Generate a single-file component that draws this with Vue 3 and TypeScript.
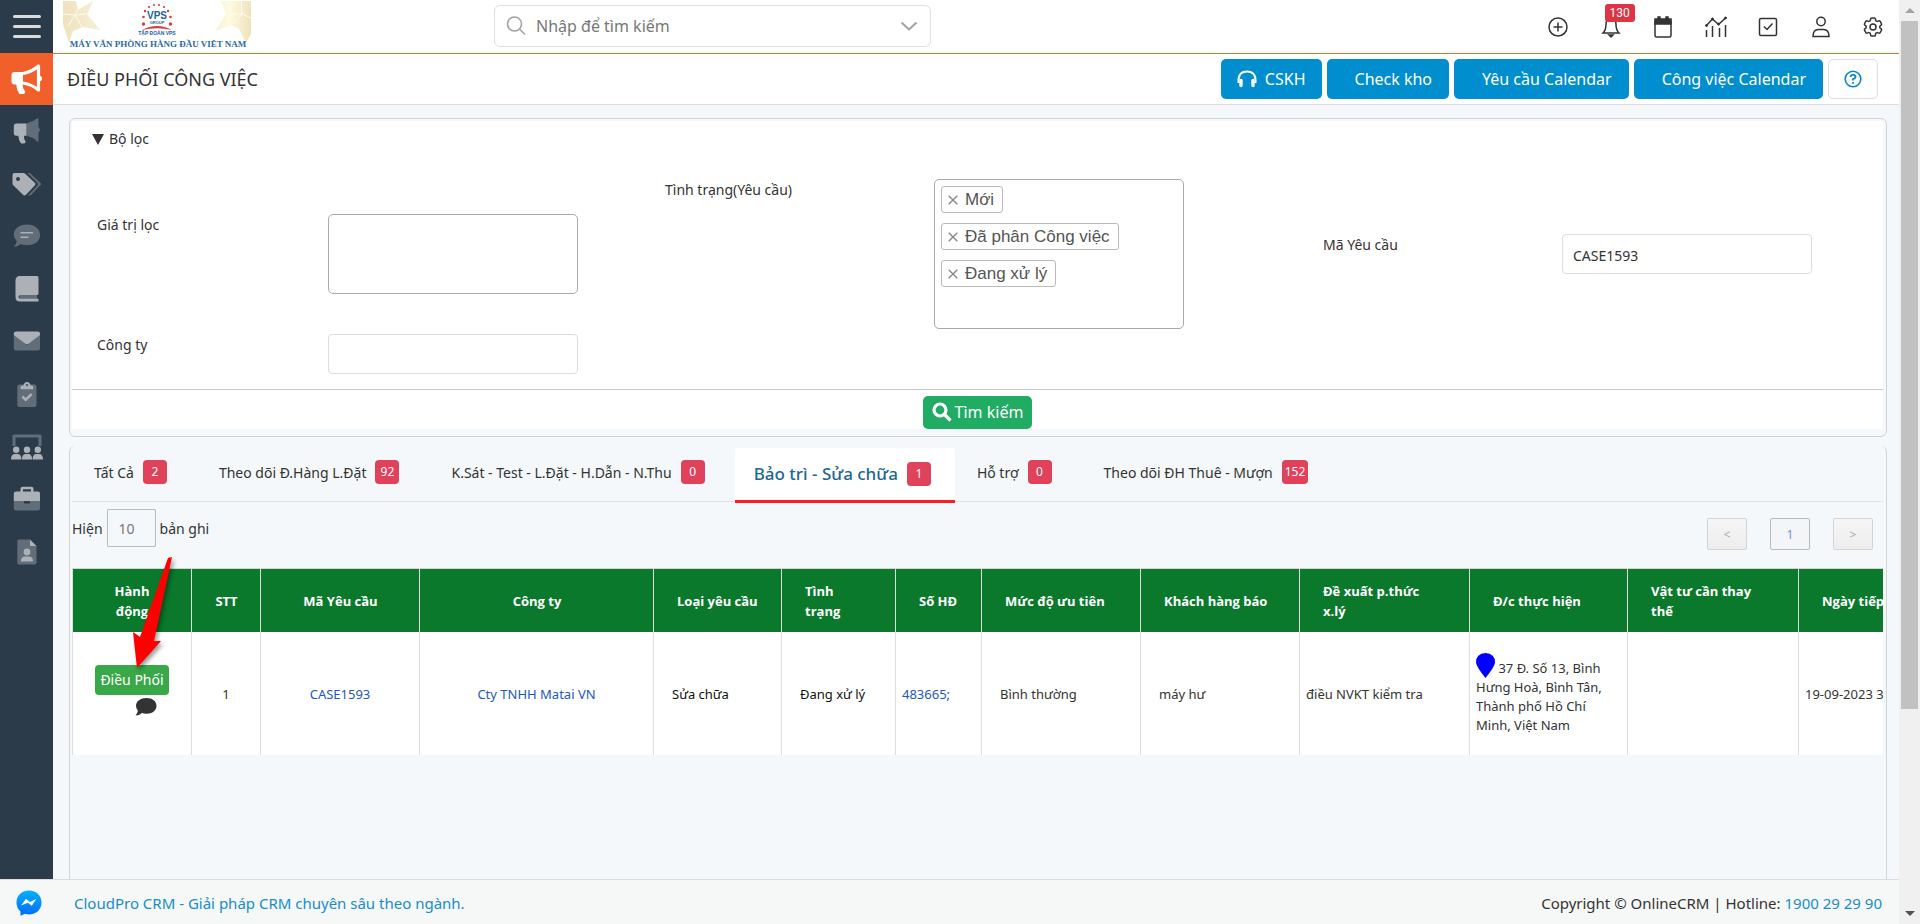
<script setup lang="ts">
import { ref } from 'vue'

type Shape = { d: string; tone: 'light' | 'dark' | 'hole' }
type MenuItem = { label: string; shapes: Shape[] }

const menu: MenuItem[] = [
  {
    label: 'Chiến dịch',
    shapes: [
      { d: 'M15.500 8.500 L23 5.500 L26.500 3.200 Q27.500 3 27.500 4.500 V12.500 Q29 13.500 29 15 Q29 16.500 27.500 17.300 V25.500 Q27.500 27.200 26.200 26.600 L23 23.500 L15.500 20.800 Z', tone: 'dark' },
      { d: 'M5 8.500 H15.500 V20.800 H13 Q12.500 24 14.600 26.500 Q14.500 28.500 13 28.500 H10 Q7.500 25 7.300 20.800 H5 Q2.800 20.800 2.800 18 V11 Q2.800 8.500 5 8.500 Z', tone: 'light' },
    ],
  },
  {
    label: 'Nhãn',
    shapes: [
      { d: 'M16.500 5 H19 L29.500 15 Q30.500 16 29.500 17 L19.500 27.500 H17 L26.500 17.500 Q27.500 16 26.500 15 Z', tone: 'dark' },
      { d: 'M1.500 7 Q1.500 5 3.500 5 H12 Q13.500 5 14.500 6 L24 15 Q25 16 24 17.200 L15 26.800 Q13.500 28 12 26.800 L2.500 17.500 Q1.500 16.500 1.500 15 Z M7 9 A2 2 0 1 0 7 13 A2 2 0 1 0 7 9 Z', tone: 'light' },
    ],
  },
  {
    label: 'Bình luận',
    shapes: [
      { d: 'M16 4.500 C24 4.500 29 9 29 15 C29 21 24 25.300 16 25.300 Q12.500 25.300 9.500 24 Q6.500 27 2.800 26.800 Q5.500 24 5.800 21 Q2.800 18.500 2.800 15 C2.800 9 8 4.500 16 4.500 Z', tone: 'dark' },
      { d: 'M9.500 12 H22 V13.500 H9.500 Z M9.500 16.500 H17.500 V18 H9.500 Z', tone: 'light' },
    ],
  },
  {
    label: 'Tài liệu',
    shapes: [
      { d: 'M8.500 21.500 H26 V26 H8.500 Z', tone: 'dark' },
      { d: 'M9 3 H26 Q27.500 3 27.500 4.500 V20.500 Q27.500 22 26 22 H9.500 Q7.500 22 7.500 24 Q7.500 25.800 9.500 25.800 H27.500 V28.500 H9 Q4.500 28.500 4.500 24 V7.500 Q4.500 3 9 3 Z', tone: 'light' },
    ],
  },
  {
    label: 'Thư',
    shapes: [
      { d: 'M2.800 9 L16 20 L29 9 V23.500 Q29 25.500 27 25.500 H5 Q2.800 25.500 2.800 23.500 Z', tone: 'dark' },
      { d: 'M5 6.500 H27 Q29 6.500 29 8.500 V10 L18 18.500 Q16 20 14 18.500 L2.800 10 V8.500 Q2.800 6.500 5 6.500 Z', tone: 'light' },
    ],
  },
  {
    label: 'Công việc',
    shapes: [
      { d: 'M8.500 6.500 H23.500 Q25.500 6.500 25.500 8.500 V27 Q25.500 29 23.500 29 H8.500 Q6.300 29 6.300 27 V8.500 Q6.300 6.500 8.500 6.500 Z', tone: 'dark' },
      { d: 'M9.500 11.300 V9 Q9.500 7.500 11.500 7.500 H12.500 Q13 4 16 4 Q19 4 19.500 7.500 H20.500 Q22.300 7.500 22.300 9 V11.300 Z M16 6 A1.300 1.300 0 1 0 16 8.600 A1.300 1.300 0 1 0 16 6 Z M10.500 19.500 L12.200 17.500 L14.700 20 L20 15 L21.500 17 L14.700 23.500 Z', tone: 'light' },
    ],
  },
  {
    label: 'Hội thảo',
    shapes: [
      { d: 'M1.500 5 Q1.500 3.500 3 3.500 H29 Q30.500 3.500 30.500 5 V15 H27.500 V6.500 H4.500 V15 H1.500 Z', tone: 'dark' },
      { d: 'M5.200 15.500 A3.200 3.200 0 1 0 5.200 21.900 A3.200 3.200 0 1 0 5.200 15.500 Z M16 15.500 A3.200 3.200 0 1 0 16 21.900 A3.200 3.200 0 1 0 16 15.500 Z M26.800 15.500 A3.200 3.200 0 1 0 26.800 21.900 A3.200 3.200 0 1 0 26.800 15.500 Z M0 28.500 Q0 23 4 23 H6.500 Q10.400 23 10.400 28.500 Z M10.900 28.500 Q10.900 23 15 23 H17 Q21.100 23 21.100 28.500 Z M21.600 28.500 Q21.600 23 25.500 23 H28 Q32 23 32 28.500 Z', tone: 'light' },
    ],
  },
  {
    label: 'Hợp đồng',
    shapes: [
      { d: 'M2.800 18 H29 V25.500 Q29 27.500 27 27.500 H5 Q2.800 27.500 2.800 25.500 Z', tone: 'dark' },
      { d: 'M9.500 8.500 V5.500 Q9.500 3.700 11.500 3.700 H20.500 Q22.500 3.700 22.500 5.500 V8.500 H27 Q29 8.500 29 10.500 V18 H2.800 V10.500 Q2.800 8.500 5 8.500 Z M12 6.200 V8.500 H20 V6.200 Z', tone: 'light' },
      { d: 'M13 18 H19 V20 Q19 20.500 18.500 20.500 H13.500 Q13 20.500 13 20 Z', tone: 'hole' },
    ],
  },
  {
    label: 'Hồ sơ',
    shapes: [
      { d: 'M8 3.500 H19 V10 H25.500 V26.500 Q25.500 28.500 23.500 28.500 H8 Q6.300 28.500 6.300 26.500 V5 Q6.300 3.500 8 3.500 Z', tone: 'dark' },
      { d: 'M19 3.500 L25.500 10 H19 Z M16 12.500 A3.400 3.400 0 1 0 16 19.300 A3.400 3.400 0 1 0 16 12.500 Z M10 25.500 Q10 20.500 14 20.500 H18 Q22 20.500 22 25.500 Z', tone: 'light' },
    ],
  },
]

const statuses = ref<string[]>(['Mới', 'Đã phân Công việc', 'Đang xử lý'])
const caseCode = ref('CASE1593')
const company = ref('')
const filterValue = ref('')
const pageSize = ref('10')

const tabs = [
  { label: 'Tất Cả', count: 2 },
  { label: 'Theo dõi Đ.Hàng L.Đặt', count: 92 },
  { label: 'K.Sát - Test - L.Đặt - H.Dẫn - N.Thu', count: 0 },
  { label: 'Bảo trì - Sửa chữa', count: 1 },
  { label: 'Hỗ trợ', count: 0 },
  { label: 'Theo dõi ĐH Thuê - Mượn', count: 152 },
]
const activeTab = ref(3)

const columns = [
  { title: 'Hành động', width: 120, kind: 'center narrow' },
  { title: 'STT', width: 69, kind: 'center' },
  { title: 'Mã Yêu cầu', width: 159, kind: 'center' },
  { title: 'Công ty', width: 234, kind: 'center' },
  { title: 'Loại yêu cầu', width: 128, kind: '' },
  { title: 'Tình trạng', width: 114, kind: 'roomy' },
  { title: 'Số HĐ', width: 86, kind: '' },
  { title: 'Mức độ ưu tiên', width: 159, kind: '' },
  { title: 'Khách hàng báo', width: 159, kind: '' },
  { title: 'Đề xuất p.thức x.lý', width: 170, kind: 'roomy' },
  { title: 'Đ/c thực hiện', width: 158, kind: '' },
  { title: 'Vật tư cần thay thế', width: 171, kind: 'roomy' },
  { title: 'Ngày tiếp', width: 161, kind: '' },
]

function removeStatus(name: string) {
  statuses.value = statuses.value.filter((s) => s !== name)
}
</script>

<template>
  <div class="app">
    <div class="view">
      <div class="body">
        <nav class="sidebar" aria-label="Menu chính">
          <button class="burger" type="button" aria-label="Mở menu"><i></i><i></i><i></i></button>
          <a class="current" href="#" aria-label="Điều phối">
            <svg width="32" height="32" viewBox="0 0 32 32" fill="none">
              <path d="M3.500 9 H12 V21.500 H11.500 Q11.500 25.500 14.200 28.500 Q14 31 12.500 31 H8.500 Q5.500 27 5.200 21.500 H3.500 Q.5 21.500 .5 18.500 V12 Q.5 9 3.500 9 Z" fill="#fff" />
              <path d="M12 10.500 Q21 9 27.500 3 V27 Q21 21.500 12 20" stroke="#fff" stroke-width="3.200" stroke-linejoin="round" />
              <path d="M28 12.500 Q31 13 31 15.500 Q31 18 28 18.500 Z" fill="#fff" />
            </svg>
          </a>
          <ul class="menu">
            <li v-for="item in menu" :key="item.label">
              <a href="#" :aria-label="item.label">
                <svg width="32" height="32" viewBox="0 0 32 32">
                  <path v-for="(s, i) in item.shapes" :key="i" :class="s.tone" :d="s.d" fill-rule="evenodd" />
                </svg>
              </a>
            </li>
          </ul>
        </nav>

        <div class="content">
          <header class="topbar">
            <a class="logo" href="#" aria-label="VPS">
              <svg width="188" height="48" viewBox="0 0 188 48">
                <defs>
                  <linearGradient id="goldL" x1="0" x2="1"><stop offset="0" stop-color="#efe3bd" /><stop offset="1" stop-color="#f7eed6" /></linearGradient>
                  <linearGradient id="goldR" x1="0" x2="1"><stop offset="0" stop-color="#f9f1d6" /><stop offset=".4" stop-color="#fffbe0" /><stop offset="1" stop-color="#efe2bb" /></linearGradient>
                </defs>
                <path d="M0 1 H13 L15 10 L30 1 L24 14 L37 30 L20 27 L10 31 L6 43 L0 24 Z" fill="url(#goldL)" />
                <path d="M188 1 H158 L163 14 L152 31 L169 25 L176 29 L183 43 L188 34 Z" fill="url(#goldR)" />
                <path d="M0 14 L12 15 L15 10 M12 15 L23 14 M12 15 L19 27 M12 15 L5 26 M178 1 L179 14 L163 14 M179 14 L188 18 M179 14 L169 25" stroke="#fffaf0" stroke-width="1" fill="none" />
                <g fill="#dc3a40">
                  <circle cx="80.500" cy="24" r="1.700" /><circle cx="80.500" cy="17" r="1.300" /><circle cx="82" cy="11" r="1.200" /><circle cx="86" cy="7" r="1.100" /><circle cx="91" cy="5" r="1" /><circle cx="96" cy="5" r="1" /><circle cx="101" cy="7" r="1.100" /><circle cx="105" cy="11" r="1.200" /><circle cx="107.500" cy="17" r="1.300" /><circle cx="107.500" cy="24" r="1.700" />
                  <path d="M79 30 Q94 22 109 30 Q94 26.500 79 30 Z" />
                </g>
                <text x="94" y="19" text-anchor="middle" class="logo-vps">VPS</text>
                <text x="94" y="24" text-anchor="middle" class="logo-group">GROUP</text>
                <text x="94" y="35" text-anchor="middle" class="logo-name">TẬP ĐOÀN VPS</text>
                <text x="95" y="47" text-anchor="middle" class="logo-slogan">MÁY VĂN PHÒNG HÀNG ĐẦU VIỆT NAM</text>
              </svg>
            </a>
            <label class="search">
              <svg width="20" height="20" viewBox="0 0 20 20" fill="none" stroke="#a3a3a3" stroke-width="1.600"><circle cx="8.500" cy="8" r="7" /><path d="M13.500 13 L19 18.500" /></svg>
              <input type="text" placeholder="Nhập để tìm kiếm" aria-label="Nhập để tìm kiếm" />
              <svg width="18" height="10" viewBox="0 0 18 10" fill="none" stroke="#a3a3a3" stroke-width="2"><path d="M1.500 1.500 L9 8.500 L16.500 1.500" /></svg>
            </label>
            <div class="tools">
              <button type="button" aria-label="Thêm">
                <svg viewBox="0 0 24 24"><circle cx="12" cy="12" r="9" /><path d="M12 7.500 V16.500 M7.500 12 H16.500" /></svg>
              </button>
              <button type="button" aria-label="Thông báo">
                <svg viewBox="0 0 24 24"><path d="M12 3.500 Q7 4 7 9.500 Q7 15 4 18 H20 Q17 15 17 9.500 Q17 4 12 3.500 Z" /><path d="M10 20 H14 L12 22 Z" class="solid" /></svg>
                <span class="count">130</span>
              </button>
              <button type="button" aria-label="Lịch">
                <svg viewBox="0 0 24 24"><rect x="4" y="5" width="16" height="17" rx="1.500" /><path d="M4 4 H7 V2 H9 V4 H15 V2 H17 V4 H20 V9 H4 Z" class="solid" /></svg>
              </button>
              <button type="button" aria-label="Báo cáo">
                <svg viewBox="0 0 24 24"><path d="M2.500 22 V15 M8.500 22 V11 M15.500 22 V13 M21.500 22 V10 M2 11 L8.500 4 L14.500 9.500 L21.500 3" /><g class="solid small"><circle cx="2.500" cy="10.500" r="1" /><circle cx="8.500" cy="4" r="1" /><circle cx="14.500" cy="9" r="1" /><circle cx="21.500" cy="3" r="1" /></g></svg>
              </button>
              <button type="button" aria-label="Việc cần làm">
                <svg viewBox="0 0 24 24"><rect x="3.500" y="3.500" width="17" height="17" rx="1.500" /><path d="M8 11.500 L11 14.500 L16.500 8.500" /></svg>
              </button>
              <button type="button" aria-label="Tài khoản">
                <svg viewBox="0 0 24 24"><circle cx="12" cy="6.500" r="4.200" /><path d="M4 21.500 Q4 14.500 9.500 14.500 H14.500 Q20 14.500 20 21.500 Z" /></svg>
              </button>
              <button type="button" aria-label="Cài đặt">
                <svg viewBox="0 0 24 24"><path d="M9.594 3.940c.09-.542.56-.94 1.110-.94h2.593c.55 0 1.020.398 1.110.94l.213 1.281c.063.374.313.686.645.87.074.04.147.083.22.127.324.196.72.257 1.075.124l1.217-.456a1.125 1.125 0 011.370.49l1.296 2.247a1.125 1.125 0 01-.26 1.431l-1.003.827c-.293.24-.438.613-.431.992a6.759 6.759 0 010 .255c-.007.378.138.75.43.99l1.005.828c.424.35.534.954.26 1.430l-1.298 2.247a1.125 1.125 0 01-1.369.491l-1.217-.456c-.355-.133-.75-.072-1.076.124a6.570 6.570 0 01-.22.128c-.331.183-.581.495-.644.869l-.213 1.280c-.09.543-.56.941-1.110.941h-2.594c-.55 0-1.020-.398-1.110-.94l-.213-1.281c-.062-.374-.312-.686-.644-.87a6.520 6.520 0 01-.22-.127c-.325-.196-.72-.257-1.076-.124l-1.217.456a1.125 1.125 0 01-1.369-.49l-1.297-2.247a1.125 1.125 0 01.26-1.431l1.004-.827c.292-.24.437-.613.43-.992a6.932 6.932 0 010-.255c.007-.378-.138-.75-.43-.99l-1.004-.828a1.125 1.125 0 01-.26-1.430l1.297-2.247a1.125 1.125 0 011.370-.491l1.216.456c.356.133.751.072 1.076-.124.072-.044.146-.087.22-.128.332-.183.582-.495.644-.869l.214-1.281z" /><circle cx="12" cy="12" r="3" /></svg>
              </button>
            </div>
          </header>

          <div class="titlebar">
            <h1>ĐIỀU PHỐI CÔNG VIỆC</h1>
            <div class="actions">
              <button class="primary with-icon" type="button">
                <svg width="20" height="18" viewBox="0 0 20 18" fill="none" stroke="#fff"><path d="M1.500 13 V9.500 Q2 1.500 10 1.500 Q18 1.500 18.500 9.500 V13" stroke-width="2" /><path d="M4 10.500 V15.500 M16 10.500 V15.500" stroke-width="3.400" stroke-linecap="round" /></svg>
                CSKH
              </button>
              <button class="primary" type="button">Check kho</button>
              <button class="primary" type="button">Yêu cầu Calendar</button>
              <button class="primary" type="button">Công việc Calendar</button>
              <button class="help" type="button" aria-label="Trợ giúp">
                <svg width="18" height="18" viewBox="0 0 18 18" fill="none" stroke="#0088cf" stroke-width="1.600"><circle cx="9" cy="9" r="7.800" /><path d="M6.500 7 Q6.800 4.800 9 4.800 Q11.500 4.800 11.500 7 Q11.500 8.300 9 9.200 V10.500 M9 12 V13.700" stroke-width="1.800" /></svg>
              </button>
            </div>
          </div>

          <main class="page">
            <section class="filter">
              <details open>
                <summary>Bộ lọc</summary>
                <div class="fields">
                  <div class="group">
                    <label for="f-value">Giá trị lọc</label>
                    <textarea id="f-value" v-model="filterValue"></textarea>
                  </div>
                  <div class="group">
                    <span class="caption" id="f-status">Tình trạng(Yêu cầu)</span>
                    <div class="multi" role="group" aria-labelledby="f-status">
                      <span v-for="s in statuses" :key="s" class="tag">
                        <button type="button" :aria-label="'Xóa ' + s" @click="removeStatus(s)">
                          <svg width="10" height="10" viewBox="0 0 10 10" stroke="#888" stroke-width="1.400"><path d="M.7 .7 L9.300 9.300 M9.300 .7 L.7 9.300" /></svg>
                        </button>{{ s }}
                      </span>
                    </div>
                  </div>
                  <div class="group">
                    <label for="f-code">Mã Yêu cầu</label>
                    <input id="f-code" v-model="caseCode" type="text" />
                  </div>
                  <div class="group">
                    <label for="f-company">Công ty</label>
                    <input id="f-company" v-model="company" type="text" />
                  </div>
                </div>
                <div class="submit">
                  <button type="button">
                    <svg width="20" height="20" viewBox="0 0 20 20" fill="none" stroke="#fff" stroke-width="3.200"><circle cx="8" cy="8" r="6" /><path d="M12.500 12.500 L18.500 18.500" /></svg>
                    Tìm kiếm
                  </button>
                </div>
              </details>
            </section>

            <section class="results">
              <div class="tabs" role="tablist">
                <button
                  v-for="(t, i) in tabs"
                  :key="t.label"
                  type="button"
                  role="tab"
                  :aria-selected="i === activeTab"
                  :class="{ active: i === activeTab }"
                  @click="activeTab = i"
                >
                  {{ t.label }}<span class="badge">{{ t.count }}</span>
                </button>
              </div>

              <div class="controls">
                <label class="size">Hiện <input v-model="pageSize" type="text" /> bản ghi</label>
                <div class="pager">
                  <button type="button" aria-label="Trang trước">&lt;</button>
                  <button type="button" class="on">1</button>
                  <button type="button" aria-label="Trang sau">&gt;</button>
                </div>
              </div>

              <div class="grid">
                <div class="scroller">
                  <table>
                    <colgroup>
                      <col v-for="c in columns" :key="c.title" :style="{ width: c.width + 'px' }" />
                    </colgroup>
                    <thead>
                      <tr>
                        <th v-for="c in columns" :key="c.title" :class="c.kind" scope="col">{{ c.title }}</th>
                      </tr>
                    </thead>
                    <tbody>
                      <tr>
                        <td class="action">
                          <button type="button">Điều Phối</button>
                          <svg class="bubble" width="22" height="20" viewBox="0 0 22 20" fill="#333"><path d="M11.500 1 C17.500 1 21.500 4.200 21.500 8.800 C21.500 13.500 17.500 16.800 11.500 16.800 Q9 16.800 7 16 Q4 18.500 .5 18.500 Q2.500 16.500 2.900 13.800 Q1 11.700 1 8.800 C1 4.200 5.500 1 11.500 1 Z" /></svg>
                        </td>
                        <td class="center">1</td>
                        <td class="center"><a href="#">CASE1593</a></td>
                        <td class="center"><a href="#">Cty TNHH Matai VN</a></td>
                        <td class="wide black">Sửa chữa</td>
                        <td class="wide black">Đang xử lý</td>
                        <td><a href="#">483665;</a></td>
                        <td class="wide">Bình thường</td>
                        <td class="wide">máy hư</td>
                        <td>điều NVKT kiểm tra</td>
                        <td class="address"><svg class="pin" width="19" height="25" viewBox="0 0 19 25"><path d="M9.500 0 Q19 .5 19 9.500 Q18.500 14 9.500 25 Q.5 14 0 9.500 Q0 .5 9.500 0 Z" fill="#00f" /></svg> 37 Đ. Số 13, Bình Hưng Hoà, Bình Tân, Thành phố Hồ Chí Minh, Việt Nam</td>
                        <td></td>
                        <td class="nowrap">19-09-2023 3</td>
                      </tr>
                    </tbody>
                  </table>
                </div>
                <svg class="pointer" width="50" height="124" viewBox="0 0 50 124"><path d="M48 4 L44 5 L16 84 L9 79 L13 115 L37 88 L30 88 Z" fill="#f00" /></svg>
              </div>
            </section>
          </main>
        </div>
      </div>

      <footer class="footer">
        <a class="messenger" href="#" aria-label="Messenger">
          <svg width="26" height="26" viewBox="0 0 26 26">
            <defs><linearGradient id="msg" x1="0" y1="0" x2="0" y2="1"><stop offset="0" stop-color="#00b2ff" /><stop offset="1" stop-color="#006aff" /></linearGradient></defs>
            <path d="M13 .5 C20.500 .5 25.500 5.800 25.500 12.500 C25.500 19.500 20 24.500 13 24.500 Q11 24.500 9 23.800 L4.500 25.800 V21.500 Q.5 18 .5 12.500 C.5 5.800 5.500 .5 13 .5 Z" fill="url(#msg)" />
            <path d="M5 15.500 L10 8.800 L14 12 L20.500 8.800 L15.800 15.800 L11.800 12.800 Z" fill="#fff" />
          </svg>
        </a>
        <a class="vendor" href="#">CloudPro CRM - Giải pháp CRM chuyên sâu theo ngành.</a>
        <span class="copy">Copyright © OnlineCRM | Hotline: <a href="#">1900 29 29 90</a></span>
      </footer>
    </div>

    <div class="scrollbar" aria-hidden="true">
      <span class="up"></span>
      <span class="track"><span class="thumb"></span></span>
      <span class="down"></span>
    </div>
  </div>
</template>

<style>
body {
  margin: 0;
}
</style>

<style scoped>
* {
  box-sizing: border-box;
}
.app {
  display: flex;
  height: 100vh;
  font-family: 'Noto Sans', 'Open Sans', sans-serif;
  font-size: 14px;
  color: #333;
  background: #f4f8fb;
}
button,
input,
textarea {
  font: inherit;
  color: inherit;
}
button {
  border: 0;
  padding: 0;
  background: none;
  cursor: pointer;
}
svg {
  display: block;
}
a {
  text-decoration: none;
}
.view {
  flex: 1;
  min-width: 0;
  display: flex;
  flex-direction: column;
}
.body {
  flex: 1;
  min-height: 0;
  display: flex;
}

/* sidebar */
.sidebar {
  width: 53px;
  flex: none;
  background: #2c3b49;
}
.burger {
  width: 100%;
  height: 53px;
  display: flex;
  flex-direction: column;
  align-items: center;
  justify-content: center;
  gap: 7px;
}
.burger i {
  width: 28px;
  height: 3px;
  border-radius: 2px;
  background: #d9dbdd;
}
.current {
  height: 52px;
  display: flex;
  align-items: center;
  justify-content: center;
  background: #f1602b;
}
.menu {
  height: 473px;
  margin: 0;
  padding: 0;
  list-style: none;
  display: grid;
  grid-auto-rows: 1fr;
}
.menu a {
  height: 100%;
  display: flex;
  align-items: center;
  justify-content: center;
}
.light {
  fill: #abb1b7;
}
.dark {
  fill: #616d78;
}
.hole {
  fill: #2c3b49;
}

/* top bar */
.content {
  flex: 1;
  min-width: 0;
  display: flex;
  flex-direction: column;
}
.topbar {
  height: 54px;
  flex: none;
  display: flex;
  align-items: center;
  padding: 0 12px 0 10px;
  background: #fff;
  border-bottom: 1px solid #ee6a2f;
}
.logo {
  height: 100%;
}
.logo-vps {
  font: bold 10px 'Liberation Sans', sans-serif;
  fill: #1d5fa5;
}
.logo-group {
  font: bold 4px 'Liberation Sans', sans-serif;
  fill: #1d5fa5;
}
.logo-name {
  font: bold 5px 'Liberation Sans', sans-serif;
  fill: #1d5fa5;
}
.logo-slogan {
  font: bold 9px 'Liberation Serif', serif;
  fill: #2a6aa8;
}
.search {
  width: 437px;
  height: 42px;
  margin: -2px auto 0 243px;
  display: flex;
  align-items: center;
  gap: 10px;
  padding: 0 12px 0 11px;
  border: 1px solid #e0e0e0;
  border-radius: 6px;
}
.search input {
  flex: 1;
  min-width: 0;
  border: 0;
  outline: 0;
  padding: 0;
  font-size: 16px;
}
.search input::placeholder {
  color: #777;
  opacity: 1;
}
.tools {
  width: 343px;
  display: flex;
  justify-content: space-between;
}
.tools button {
  position: relative;
  width: 28px;
  height: 28px;
  display: flex;
  align-items: center;
  justify-content: center;
}
.tools svg {
  width: 24px;
  height: 24px;
  fill: none;
  stroke: #333;
  stroke-width: 1.5;
}
.tools .solid {
  fill: #333;
}
.tools .small {
  stroke-width: 1;
}
.count {
  position: absolute;
  left: 8px;
  top: -9px;
  padding: 0 5px;
  border-radius: 3px;
  background: #dc3545;
  color: #fff;
  font: 12px/18px Roboto, sans-serif;
}

/* title bar */
.titlebar {
  height: 51px;
  flex: none;
  display: flex;
  align-items: center;
  justify-content: space-between;
  padding: 0 21px 0 14px;
  background: #fff;
  border-bottom: 1px solid #ddd;
}
h1 {
  margin: 0;
  font-size: 18px;
  font-weight: 400;
}
.actions {
  display: flex;
  gap: 5px;
}
.actions button {
  height: 40px;
  border-radius: 5px;
}
.actions .primary {
  padding: 0 17px 0 28px;
  background: #008ecf;
  color: #fff;
  font-size: 16px;
}
.actions .with-icon {
  display: flex;
  align-items: center;
  gap: 8px;
  padding: 0 16px;
}
.actions .help {
  width: 50px;
  display: flex;
  align-items: center;
  justify-content: center;
  border: 1px solid #ddd;
}

/* filter */
.page {
  flex: 1;
  min-height: 0;
  padding: 13px 12px 0 16px;
  display: flex;
  flex-direction: column;
  gap: 9px;
}
.filter {
  flex: none;
  padding: 2px 3px 7px 2px;
  border: 1px solid #d3d3d3;
  border-radius: 6px;
}
details {
  background: #fff;
}
summary {
  display: flex;
  align-items: center;
  gap: 5px;
  padding: 7px 20px;
  line-height: 22px;
  list-style: none;
  cursor: pointer;
}
summary::before {
  content: '';
  border: 6px solid transparent;
  border-top: 11px solid #333;
  border-bottom: 0;
}
.fields {
  display: grid;
  grid-template-columns: 568fr 658fr 560fr;
  gap: 5px 0;
  padding: 22px 0 15px 25px;
}
.group {
  display: grid;
  grid-template-columns: 231fr 337fr;
  align-self: center;
  align-items: start;
}
.group:nth-child(2) {
  grid-template-columns: 269fr 389fr;
}
.group:nth-child(3) {
  grid-template-columns: 239fr 321fr;
}
.group label,
.caption {
  line-height: 22px;
}
.group input,
.group textarea,
.multi {
  width: 250px;
  height: 40px;
  border: 1px solid #ddd;
  border-radius: 4px;
  background: #fff;
}
.group input {
  padding: 2px 10px 0;
}
.group textarea {
  height: 80px;
  border-color: #aaa;
  border-radius: 5px;
  resize: none;
}
.multi {
  height: 150px;
  padding: 6px;
  display: flex;
  flex-direction: column;
  align-items: flex-start;
  gap: 10px;
  border-color: #aaa;
  border-radius: 5px;
}
.tag {
  height: 27px;
  display: flex;
  align-items: center;
  gap: 7px;
  padding: 0 8px 0 6px;
  border: 1px solid #bbb;
  border-radius: 3px;
  color: #555;
  font: 17px 'Liberation Sans', Arial, sans-serif;
}
.submit {
  display: flex;
  justify-content: center;
  padding-top: 6px;
  border-top: 1px solid #c6c6c6;
}
.submit button {
  height: 33px;
  display: flex;
  align-items: center;
  gap: 3px;
  padding: 0 9px 2px;
  border-radius: 5px;
  background: #20ad63;
  color: #fff;
  font-size: 16px;
}

/* results */
.results {
  flex: 1;
  min-height: 0;
  padding: 2px 3px 0 2px;
  border: 1px solid #d3d3d3;
  border-width: 0 1px;
  border-radius: 6px 6px 0 0;
}
.tabs {
  height: 54px;
  display: flex;
  align-items: flex-start;
  border-bottom: 1px solid #dfe3e7;
}
.tabs button {
  height: 54px;
  display: flex;
  align-items: center;
  gap: 9px;
  padding: 0 30px 6px 22px;
}
.tabs .active {
  height: 55px;
  padding: 0 24px 1px 19px;
  background: #fff;
  border-bottom: 3px solid #fd1d1d;
  color: #1b6793;
  font-size: 17px;
  font-weight: 500;
  border-radius: 3px 3px 0 0;
}
.badge {
  min-width: 24px;
  padding: 0 3px;
  border-radius: 4px;
  background: #e0425c;
  color: #fff;
  font-size: 12px;
  font-weight: 400;
  line-height: 24px;
  text-align: center;
}
.controls {
  height: 66px;
  display: flex;
  justify-content: space-between;
  padding: 7px 10px 0 0;
}
.size {
  height: 38px;
  display: flex;
  align-items: center;
  gap: 4px;
}
.size input {
  width: 49px;
  height: 38px;
  padding: 0 11px;
  border: 1px solid #bbb;
  border-radius: 1px;
  background: transparent;
  color: #777;
}
.pager {
  display: flex;
  gap: 23px;
  padding-top: 9px;
}
.pager button {
  width: 40px;
  height: 32px;
  border: 1px solid #d3d3d3;
  border-radius: 2px;
  background: linear-gradient(#f6f6f6, #ededed);
  color: #aaa;
  font-size: 12px;
}
.pager .on {
  border-color: #bbb;
  background: #f4f5f6;
  color: #6f8ff0;
}
.grid {
  position: relative;
}
.scroller {
  overflow: hidden;
}
table {
  width: 1888px;
  table-layout: fixed;
  border-collapse: separate;
  border-spacing: 0;
  border-top: 1px solid #d3d3d3;
}
th {
  height: 63px;
  padding: 0 22px 0 23px;
  background: #0a792b;
  border-right: 1px solid #ddd;
  color: #fff;
  font: bold 13px/20px 'Open Sans', sans-serif;
  text-align: left;
}
td {
  height: 123px;
  padding: 0 6px;
  background: #fff;
  border-right: 1px solid #ddd;
  font-size: 13px;
  line-height: 20px;
}
th:first-child,
td:first-child {
  border-left: 1px solid #ddd;
}
.center {
  text-align: center;
}
th.roomy {
  padding-right: 40px;
}
th.narrow {
  padding: 0 38px;
}
.wide {
  padding-left: 18px;
}
.black {
  color: #111;
}
.nowrap {
  white-space: nowrap;
}
td a {
  color: #2257c4;
}
.action {
  padding-bottom: 6px;
}
.action button {
  display: block;
  height: 30px;
  margin: 0 auto;
  padding: 0 5px;
  border-radius: 4px;
  background: #38a849;
  color: #fff;
  font-size: 14px;
  white-space: nowrap;
}
.bubble {
  margin: 2px 0 0 56px;
}
.pointer {
  position: absolute;
  left: 52px;
  top: -15px;
  filter: drop-shadow(2px 3px 2px rgba(0, 0, 0, 0.4));
}
.address {
  line-height: 19px;
}
.pin {
  display: inline-block;
  vertical-align: -5px;
}

/* footer */
.footer {
  height: 45px;
  flex: none;
  display: flex;
  align-items: center;
  padding: 2px 17px 0 16px;
  background: #f6f8f8;
  border-top: 1px solid #dcdcdc;
  font-size: 15px;
}
.footer a {
  color: #178dcb;
}
.vendor {
  margin-left: 32px;
}
.copy {
  margin-left: auto;
}

/* scrollbar */
.scrollbar {
  width: 21px;
  flex: none;
  display: flex;
  flex-direction: column;
  align-items: center;
  background: #f0f0f0;
}
.up,
.down {
  height: 21px;
  display: flex;
  align-items: center;
}
.up::before,
.down::before {
  content: '';
  border: 5px solid transparent;
}
.up::before {
  border-top: 0;
  border-bottom-color: #a3a3a3;
}
.down::before {
  border-bottom: 0;
  border-top-color: #505050;
}
.track {
  flex: 1;
  width: 17px;
}
.thumb {
  display: block;
  height: 78%;
  background: #c1c1c1;
}
</style>
